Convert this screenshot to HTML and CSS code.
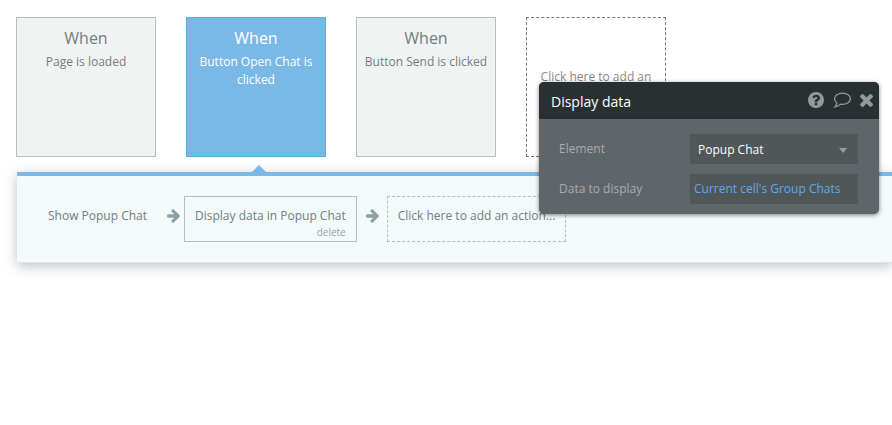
FILE: index.html
```
<!DOCTYPE html>
<html lang="en">
<head>
	<meta charset="utf-8">
	<title>Workflow</title>
	<link rel="stylesheet" href="styles.css">
</head>
<body>
<div class="events">
	<button type="button" class="event">
		<span class="when">When</span>
		<span>Page is loaded</span>
	</button>
	<button type="button" class="event selected">
		<span class="when">When</span>
		<span>Button Open Chat is clicked</span>
	</button>
	<button type="button" class="event">
		<span class="when">When</span>
		<span>Button Send is clicked</span>
	</button>
	<button type="button" class="event add-event">Click here to add an event...</button>
</div>

<div class="actions">
	<button type="button" class="action">Show Popup Chat</button>
	<svg class="arrow" viewBox="0 160 1472 1600" aria-hidden="true"><path d="M1472 960q0 54-37 91l-651 651q-39 37-91 37-51 0-90-37l-75-75q-38-38-38-91t38-91l293-293H117q-52 0-84.500-37.500T0 1024V896q0-53 32.500-90.500T117 768h704L528 474q-38-36-38-90t38-90l75-75q38-38 90-38 53 0 91 38l651 651q37 35 37 90z"/></svg>
	<div class="action current">
		<span>Display data in Popup Chat</span>
		<a href="#" class="delete">delete</a>
	</div>
	<svg class="arrow" viewBox="0 160 1472 1600" aria-hidden="true"><path d="M1472 960q0 54-37 91l-651 651q-39 37-91 37-51 0-90-37l-75-75q-38-38-38-91t38-91l293-293H117q-52 0-84.500-37.500T0 1024V896q0-53 32.500-90.500T117 768h704L528 474q-38-36-38-90t38-90l75-75q38-38 90-38 53 0 91 38l651 651q37 35 37 90z"/></svg>
	<button type="button" class="action add-action">Click here to add an action...</button>
</div>

<!-- property editor floats over the workflow -->
<div class="editor">
	<div class="editor-head">
		<h2>Display data</h2>
		<button type="button" class="icon" aria-label="Help">
			<svg width="16" height="16" viewBox="128 128 1536 1536"><path d="M1024 1376v-192q0-14-9-23t-23-9h-192q-14 0-23 9t-9 23v192q0 14 9 23t23 9h192q14 0 23-9t9-23zm256-672q0-88-55.500-163t-138.500-116-170-41q-243 0-371 213-15 24 8 42l132 100q7 6 19 6 16 0 25-12 53-68 86-92 34-24 86-24 48 0 85.500 26t37.500 59q0 38-20 61t-68 45q-63 28-115.500 86.500t-52.500 125.500v36q0 14 9 23t23 9h192q14 0 23-9t9-23q0-19 21.500-49.500t54.500-49.500q32-18 49-28.500t46-35 44.500-48 28-60.500 12.500-81zm384 192q0 209-103 385.500t-279.500 279.500-385.500 103-385.500-103-279.500-279.500-103-385.500 103-385.500 279.500-279.500 385.500-103 385.500 103 279.500 279.500 103 385.500z"/></svg>
		</button>
		<button type="button" class="icon" aria-label="Comment">
			<svg class="bubble" width="18" height="16" viewBox="0 0 18 16"><path d="M9.500 1.200c4.400 0 7.900 2.500 7.900 5.600s-3.500 5.600-7.900 5.600c-.8 0-1.500-.1-2.200-.2-1.300 1.300-3 2.300-5.300 2.700 1-1 1.700-2.200 1.800-3.900C2.400 10 1.600 8.500 1.600 6.800c0-3.100 3.500-5.600 7.900-5.600z"/></svg>
		</button>
		<button type="button" class="icon" aria-label="Close">
			<svg width="13" height="13" viewBox="302 238 1188 1188"><path d="M1490 1258q0 40-28 68l-136 136q-28 28-68 28t-68-28l-294-294-294 294q-28 28-68 28t-68-28l-136-136q-28-28-28-68t28-68l294-294-294-294q-28-28-28-68t28-68l136-136q28-28 68-28t68 28l294 294 294-294q28-28 68-28t68 28l136 136q28 28 28 68t-28 68l-294 294 294 294q28 28 28 68z" transform="translate(0 -64)"/></svg>
		</button>
	</div>
	<div class="editor-body">
		<label for="element">Element</label>
		<div class="dropdown">
			<select id="element">
				<option>Popup Chat</option>
			</select>
		</div>
		<label for="data">Data to display</label>
		<button type="button" id="data" class="expression">Current cell's Group Chats</button>
	</div>
</div>
</body>
</html>
```

FILE: styles.css
```
* {
	box-sizing: border-box;
}
body {
	min-height: 100vh;
	margin: 0;
	background-color: #fff;
	color: #6f7f82;
	font-family: "Open Sans", sans-serif;
	font-size: 12px;
	line-height: 18px;
}
button, select {
	margin: 0;
	border: none;
	background: none;
	color: inherit;
	font: inherit;
	cursor: pointer;
}

/* events */
.events {
	display: flex;
	gap: 30px;
	padding: 17px 16px 15px;
}
.event {
	position: relative;
	display: flex;
	flex-direction: column;
	align-items: center;
	flex: none;
	width: 140px;
	height: 140px;
	padding: 8px 4px;
	border: 1px solid #afbfc3;
	background-color: #f0f3f2;
	text-align: center;
}
.when {
	margin-bottom: 3px;
	font-size: 16px;
	line-height: 24px;
}
.selected {
	padding: 8px 10px;
	border-color: #52aee0;
	background-color: #7ab8e6;
	color: #fff;
}
.selected::after {
	content: "";
	position: absolute;
	top: 147px;
	left: 65px;
	border: 7px solid transparent;
	border-top: none;
	border-bottom-color: #7ab8e6;
}
.add-event {
	justify-content: center;
	padding: 8px 12px 10px;
	border: 1px dashed #777;
	background: none;
	color: #888;
}

/* actions */
.actions {
	display: flex;
	align-items: center;
	margin-left: 17px;
	padding: 20px;
	border-top: 4px solid #7ab8e6;
	border-bottom: 1px solid #dde5e9;
	background-color: #f4f9fa;
	box-shadow: 0 3px 12px rgba(0, 0, 0, 0.25);
}
.action {
	display: flex;
	flex-direction: column;
	flex: none;
	height: 46px;
	padding: 10px;
	border: 1px solid transparent;
}
.current {
	border-color: #afbfc3;
}
.add-action {
	margin-left: 4px;
	border: 1px dashed #afbfc3;
}
.delete {
	align-self: flex-end;
	color: #96a3a6;
	font-size: 10px;
	line-height: 14px;
	text-decoration: none;
}
.arrow {
	flex: none;
	width: 13px;
	height: 14px;
	margin: 0 4px 6px 9px;
	fill: #8ba0a7;
}

/* property editor */
.editor {
	position: absolute;
	top: 82px;
	left: 539px;
	width: 340px;
	border-radius: 5px;
	background-color: #606569;
	box-shadow: 0 1px 4px rgba(0, 0, 0, 0.5);
	overflow: hidden;
}
.editor-head {
	display: flex;
	align-items: center;
	gap: 9px;
	height: 37px;
	padding: 0 6px 1px 12px;
	background-color: #293032;
}
.editor-head h2 {
	flex: 1;
	margin: 0;
	padding-top: 4px;
	color: #fff;
	font-size: 14px;
	font-weight: normal;
}
.icon {
	display: flex;
	padding: 0;
	fill: #8f9a9d;
}
.bubble {
	fill: none;
	stroke: #8f9a9d;
	stroke-width: 1.3;
}
.editor-body {
	display: grid;
	grid-template-columns: 131px 1fr;
	gap: 10px 0;
	padding: 15px 21px 10px 20px;
	color: #a7abad;
}
.editor-body label {
	line-height: 30px;
}
.dropdown {
	position: relative;
}
.dropdown::after {
	content: "";
	position: absolute;
	top: 14px;
	right: 11px;
	border: 4px solid transparent;
	border-top: 5px solid #989da0;
	border-bottom: none;
	pointer-events: none;
}
.dropdown select, .expression {
	display: block;
	width: 100%;
	height: 30px;
	background-color: #515659;
	text-align: left;
}
.dropdown select {
	appearance: none;
	padding: 2px 8px 0;
	color: #fff;
}
.expression {
	padding: 0 4px;
	color: #5fa8ee;
}
```
